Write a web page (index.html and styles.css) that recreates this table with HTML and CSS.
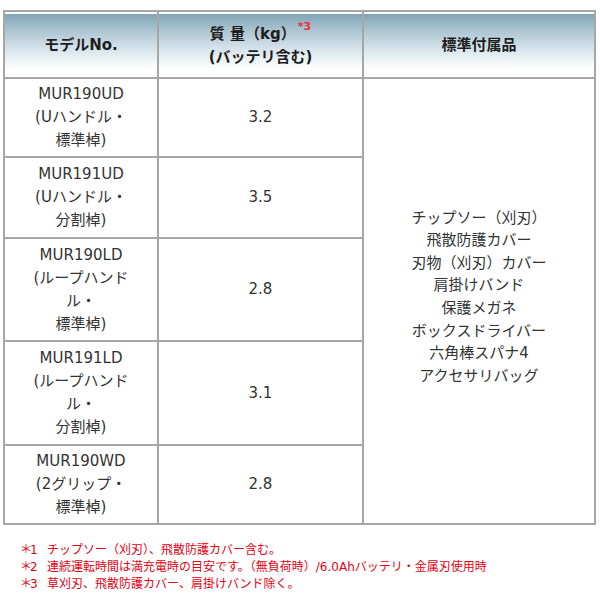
FILE: index.html
```html
<!DOCTYPE html>
<html lang="ja">
<head>
<meta charset="utf-8">
<link rel="stylesheet" href="styles.css">
</head>
<body>
<div class="page">
  <table class="spec">
    <colgroup>
      <col class="c1"><col class="c2"><col class="c3">
    </colgroup>
    <thead>
      <tr>
        <th>モデルNo.</th>
        <th>質 量（kg）<sup class="note">*3</sup><br>(バッテリ含む)</th>
        <th>標準付属品</th>
      </tr>
    </thead>
    <tbody>
      <tr>
        <td>MUR190UD<br>(Uハンドル・<br>標準棹)</td>
        <td>3.2</td>
        <td rowspan="5" class="acc">チップソー（刈刃）<br>飛散防護カバー<br>刃物（刈刃）カバー<br>肩掛けバンド<br>保護メガネ<br>ボックスドライバー<br>六角棒スパナ4<br>アクセサリバッグ</td>
      </tr>
      <tr>
        <td>MUR191UD<br>(Uハンドル・<br>分割棹)</td>
        <td>3.5</td>
      </tr>
      <tr>
        <td>MUR190LD<br>(ループハンド<br>ル・<br>標準棹)</td>
        <td>2.8</td>
      </tr>
      <tr>
        <td>MUR191LD<br>(ループハンド<br>ル・<br>分割棹)</td>
        <td>3.1</td>
      </tr>
      <tr>
        <td>MUR190WD<br>(2グリップ・<br>標準棹)</td>
        <td>2.8</td>
      </tr>
    </tbody>
  </table>
  <ul class="notes">
    <li><span class="mark">＊1</span>チップソー（刈刃）、飛散防護カバー含む。</li>
    <li><span class="mark">＊2</span>連続運転時間は満充電時の目安です。（無負荷時）/6.0Ahバッテリ・金属刃使用時</li>
    <li><span class="mark">＊3</span>草刈刃、飛散防護カバー、肩掛けバンド除く。</li>
  </ul>
</div>
</body>
</html>
```

FILE: styles.css
```css
html, body {
  margin: 0;
  padding: 0;
  background: #fff;
}
.page {
  padding: 10px 6px 0 3px;
  font-family: "DejaVu Sans", "Noto Sans CJK JP", sans-serif;
  color: #333;
}
.spec {
  width: 591px;
  border-collapse: separate;
  border-spacing: 0;
  border: 1px solid #a6a6a6;
  table-layout: fixed;
}
.c1 { width: 154px; }
.c2 { width: 205px; }
.c3 { width: 232px; }
.spec th,
.spec td {
  border: 1px solid #a6a6a6;
  text-align: center;
  vertical-align: middle;
  font-size: 15px;
  line-height: 23px;
  padding: 0 4px;
  white-space: nowrap;
}
.spec th {
  height: 63px;
  font-weight: bold;
  color: #1e1e1e;
  background: linear-gradient(to bottom, #7b9fb1 0%, #a6c1ce 25%, #d4e2e9 55%, #fff 88%, #fff 100%);
  box-shadow: inset 0 2px 0 #fff;
  padding-top: 2px;
}
.note {
  color: #e8303a;
  font-size: 11px;
  vertical-align: top;
  line-height: 11px;
  position: relative;
  top: -2px;
  margin-left: 2px;
}
.spec tbody tr:nth-child(1) td { height: 77px; }
.spec tbody tr:nth-child(2) td { height: 79px; }
.spec tbody tr:nth-child(3) td { height: 101px; }
.spec tbody tr:nth-child(4) td { height: 102px; }
.spec tbody tr:nth-child(5) td { height: 77px; }
.spec td.acc {
  line-height: 22.6px;
  padding-bottom: 8px;
}
.notes {
  list-style: none;
  margin: 17px 0 0 17px;
  padding: 0;
  color: #e60012;
  font-size: 12px;
  line-height: 17px;
}
.notes .mark {
  display: inline-block;
  width: 27px;
  letter-spacing: -2px;
}
```
